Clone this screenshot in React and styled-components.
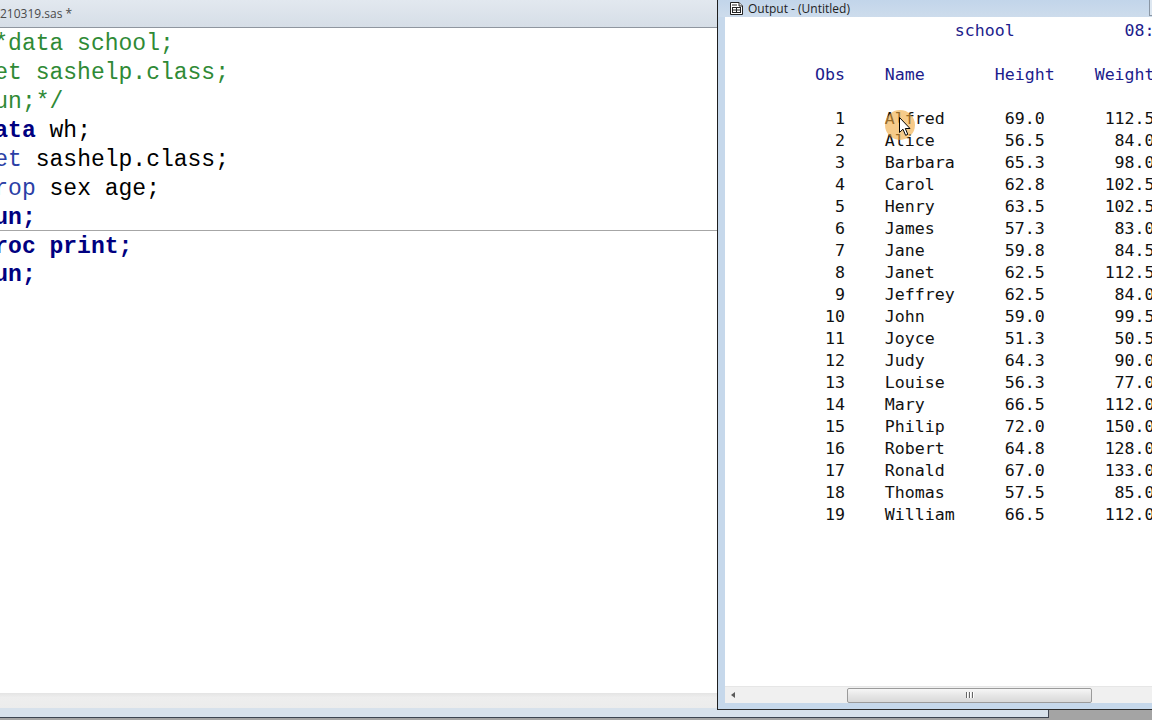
import React from "react";
import styled, { createGlobalStyle } from "styled-components";

const GlobalStyle = createGlobalStyle`
  html, body {
    margin: 0;
    padding: 0;
    width: 1152px;
    height: 720px;
    overflow: hidden;
    background: #a4a4a4;
  }
`;

const Desktop = styled.div`
  position: relative;
  width: 1152px;
  height: 720px;
  overflow: hidden;
  background: #a4a4a4;
`;

/* ---------- editor window ---------- */

const EditorWindow = styled.div`
  position: absolute;
  left: 0;
  top: 0;
  width: 1048px;
  height: 717px;
  display: flex;
  flex-direction: column;
  background: #d9e3ed;
  border-right: 1px solid #404652;
  border-bottom: 1px solid #3c4450;
  overflow: hidden;
`;

const EditorTitle = styled.div`
  height: 27px;
  flex: none;
  display: flex;
  align-items: center;
  background: linear-gradient(#e2e8ef, #d6dee7);
  border-bottom: 1px solid #8f969f;
  font-family: "Open Sans", "Noto Sans", sans-serif;
  font-size: 12px;
  color: #4a4a4a;
`;

const CodeArea = styled.div`
  flex: 1;
  background: #ffffff;
  overflow: hidden;
`;

const CodeBlock = styled.div`
  margin-left: -19.5px;
  font-family: "Liberation Mono", monospace;
  font-size: 23px;
  white-space: pre;
`;

const CodeLine = styled.div`
  height: 29px;
  padding-top: 4px;
  line-height: 25px;
  color: #000000;
  box-sizing: border-box;
  border-top: ${(p) => (p.$step ? "1px solid #a6a6a6" : "none")};
  margin-top: ${(p) => (p.$step ? "-1px" : "0")};
`;

const Tok = styled.span`
  color: ${(p) =>
    p.$k === "comment"
      ? "#2f8a36"
      : p.$k === "kw"
      ? "#000080"
      : p.$k === "stmt"
      ? "#2b3fa6"
      : "#000000"};
  font-weight: ${(p) => (p.$k === "kw" ? 700 : 400)};
`;

const EditorScroll = styled.div`
  height: 15px;
  flex: none;
  background: linear-gradient(#e4e4e4, #eeeeee 30%, #ececec);
`;

const EditorFrameBottom = styled.div`
  height: 9px;
  flex: none;
  background: #d7e1eb;
`;

/* ---------- output window ---------- */

const OutputWindow = styled.div`
  position: absolute;
  left: 717px;
  top: 0;
  width: 460px;
  height: 709px;
  display: flex;
  flex-direction: column;
  background: #c6d8eb;
  border-left: 1px solid #1e1e1e;
  border-bottom: 1px solid #2c2c2c;
`;

const OutputTitle = styled.div`
  height: 16px;
  padding-bottom: 1px;
  flex: none;
  display: flex;
  align-items: center;
  gap: 4px;
  padding-left: 11px;
  background: linear-gradient(#c2d5ea, #cddcec);
  font-family: "Open Sans", "Noto Sans", sans-serif;
  font-size: 12px;
  color: #1e1e1e;
`;

const CloseEdge = styled.div`
  position: absolute;
  left: 431px;
  top: 0;
  width: 20px;
  height: 15px;
  border: 1px solid #8a96a4;
  border-top: none;
  background: #dde7f1;
`;

const OutputBody = styled.div`
  flex: 1;
  margin-left: 7px;
  display: flex;
  flex-direction: column;
  background: #ffffff;
  overflow: hidden;
`;

const Listing = styled.div`
  flex: 1;
  position: relative;
  padding-top: 3px;
  font-family: "DejaVu Sans Mono", monospace;
  font-size: 16.6px;
  white-space: pre;
  overflow: hidden;
`;

const ListLine = styled.div`
  height: 22px;
  line-height: 22px;
  color: ${(p) => (p.$head ? "#1c1c8c" : "#111111")};
`;

const Highlight = styled.div`
  position: absolute;
  left: 160px;
  top: 93px;
  width: 30px;
  height: 30px;
  border-radius: 50%;
  background: rgba(240, 168, 60, 0.6);
`;

const Pointer = styled.svg`
  position: absolute;
  left: 174px;
  top: 100px;
`;

const HScroll = styled.div`
  height: 16px;
  flex: none;
  display: flex;
  align-items: center;
  background: #f0f0f0;
  border-top: 1px solid #e6e6e6;
`;

const ArrowLeft = styled.div`
  width: 0;
  height: 0;
  margin-left: 6px;
  border-top: 3px solid transparent;
  border-bottom: 3px solid transparent;
  border-right: 4px solid #5a5a5a;
`;

const Thumb = styled.div`
  margin-left: 112px;
  width: 243px;
  height: 13px;
  display: flex;
  align-items: center;
  justify-content: center;
  gap: 1px;
  border: 1px solid #9b9b9b;
  border-radius: 2px;
  background: linear-gradient(#f6f6f6, #e6e6e6 50%, #d9d9d9);
`;

const Grip = styled.span`
  width: 1px;
  height: 6px;
  background: #666;
  box-shadow: 1px 0 0 #fff;
  margin-right: 1px;
`;

const OutputFrameBottom = styled.div`
  height: 6px;
  flex: none;
`;

const DocIcon = () => (
  <svg width="15" height="15" viewBox="0 0 15 15">
    <path d="M1.5 1.5 H10 L13.5 5 V13.5 H1.5 Z" fill="#ffffff" stroke="#222" />
    <path d="M10 1.5 V5 H13.5" fill="#e0e0e0" stroke="#222" />
    <rect x="3.5" y="6.5" width="8" height="5" fill="none" stroke="#222" />
    <line x1="3.5" y1="9" x2="11.5" y2="9" stroke="#222" />
    <line x1="7.5" y1="6.5" x2="7.5" y2="11.5" stroke="#222" />
    <line x1="3" y1="4" x2="8" y2="4" stroke="#222" />
  </svg>
);

const code = [
  { parts: [["comment", "/*data school;"]] },
  { parts: [["comment", "set sashelp.class;"]] },
  { parts: [["comment", "run;*/"]] },
  { parts: [["kw", "data"], ["plain", " wh;"]] },
  { parts: [["stmt", "set"], ["plain", " sashelp.class;"]] },
  { parts: [["stmt", "drop"], ["plain", " sex age;"]] },
  { parts: [["kw", "run;"]] },
  { parts: [["kw", "proc print;"]], step: true },
  { parts: [["kw", "run;"]] },
];

const students = [
  ["Alfred", "69.0", "112.5"],
  ["Alice", "56.5", "84.0"],
  ["Barbara", "65.3", "98.0"],
  ["Carol", "62.8", "102.5"],
  ["Henry", "63.5", "102.5"],
  ["James", "57.3", "83.0"],
  ["Jane", "59.8", "84.5"],
  ["Janet", "62.5", "112.5"],
  ["Jeffrey", "62.5", "84.0"],
  ["John", "59.0", "99.5"],
  ["Joyce", "51.3", "50.5"],
  ["Judy", "64.3", "90.0"],
  ["Louise", "56.3", "77.0"],
  ["Mary", "66.5", "112.0"],
  ["Philip", "72.0", "150.0"],
  ["Robert", "64.8", "128.0"],
  ["Ronald", "67.0", "133.0"],
  ["Thomas", "57.5", "85.0"],
  ["William", "66.5", "112.0"],
];

const sp = (n) => " ".repeat(n);

export default function App() {
  return (
    <Desktop>
      <GlobalStyle />

      <EditorWindow>
        <EditorTitle>210319.sas *</EditorTitle>
        <CodeArea>
          <CodeBlock>
            {code.map((line, i) => (
              <CodeLine key={i} $step={line.step}>
                {line.parts.map(([k, t], j) => (
                  <Tok key={j} $k={k}>
                    {t}
                  </Tok>
                ))}
              </CodeLine>
            ))}
          </CodeBlock>
        </CodeArea>
        <EditorScroll />
        <EditorFrameBottom />
      </EditorWindow>

      <OutputWindow>
        <OutputTitle>
          <DocIcon />
          Output - (Untitled)
        </OutputTitle>
        <CloseEdge />
        <OutputBody>
          <Listing>
            <ListLine $head>{sp(23) + "school" + sp(11) + "08:46 Friday, March 19, 2021"}</ListLine>
            <ListLine />
            <ListLine $head>{sp(9) + "Obs" + sp(4) + "Name" + sp(7) + "Height" + sp(4) + "Weight"}</ListLine>
            <ListLine />
            {students.map(([name, h, w], i) => (
              <ListLine key={name}>
                {String(i + 1).padStart(12) + sp(4) + name.padEnd(12) + h + w.padStart(11)}
              </ListLine>
            ))}
            <Highlight />
            <Pointer width="13" height="20" viewBox="0 0 13 20">
              <path
                d="M0.5 0.5 L0.5 15.5 L4 12.2 L6.6 18.3 L8.8 17.4 L6.3 11.5 L11 11.5 Z"
                fill="#ffffff"
                stroke="#000000"
                strokeWidth="1"
                strokeLinejoin="miter"
              />
            </Pointer>
          </Listing>
          <HScroll>
            <ArrowLeft />
            <Thumb>
              <Grip />
              <Grip />
              <Grip />
            </Thumb>
          </HScroll>
        </OutputBody>
        <OutputFrameBottom />
      </OutputWindow>
    </Desktop>
  );
}
